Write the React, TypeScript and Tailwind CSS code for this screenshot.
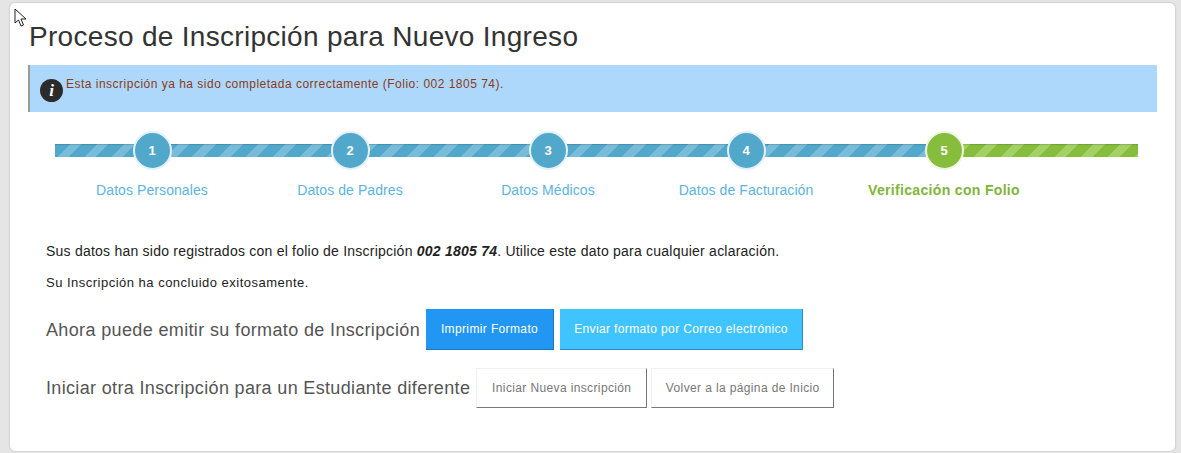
import React from "react";

const steps = [
  { n: 1, label: "Datos Personales" },
  { n: 2, label: "Datos de Padres" },
  { n: 3, label: "Datos Médicos" },
  { n: 4, label: "Datos de Facturación" },
];

const Step = ({ n, label, done }: { n: number; label: string; done?: boolean }) => (
  <div className="flex w-[198px] flex-col items-center">
    <div
      className={
        done
          ? "flex h-[39px] w-[39px] items-center justify-center rounded-full border-2 border-[#eef6e2] bg-[#86bd3d] text-[13px] font-bold text-white"
          : "flex h-[39px] w-[39px] items-center justify-center rounded-full border-2 border-[#e3f1f7] bg-[#52a8cb] text-[13px] font-bold text-white"
      }
    >
      {n}
    </div>
    <div
      className={
        done
          ? "mt-[11px] whitespace-nowrap text-[14px] font-bold leading-[18px] tracking-[0.33px] text-[#7fb539]"
          : "mt-[11px] whitespace-nowrap text-[14px] leading-[18px] tracking-[0.08px] text-[#5bb4dd]"
      }
    >
      {label}
    </div>
  </div>
);

const Btn = ({ className, children }: { className: string; children: React.ReactNode }) => (
  <button className={"whitespace-nowrap text-[12px] tracking-[0.37px] " + className}>{children}</button>
);

export default function App() {
  return (
    <div className="relative h-[453px] w-[1181px] overflow-hidden bg-[#e5e5e5] pl-[10px] pr-[6px] pt-[3px] font-['Liberation_Sans',Arial,sans-serif]">
      {/* cursor */}
      <svg className="absolute left-[14px] top-[8px]" width="13" height="19" viewBox="0 0 13 19">
        <path d="M1 1v14l3.5-3 2.5 6 2.5-1-2.5-6H12z" fill="#fff" stroke="#222" strokeWidth="1" />
      </svg>

      <div className="h-[448px] rounded-[5px] bg-white pl-[18px] pr-[18px] shadow-[0_0_2px_rgba(0,0,0,0.25)]">
        <h1 className="pl-px pt-[16px] text-[28px] font-normal leading-[36px] tracking-[0.3px] text-[#333]">
          Proceso de Inscripción para Nuevo Ingreso
        </h1>

        <div className="mt-[10px] flex h-[47px] items-start border-l-2 border-[#9a9a9a] bg-[#add8fb] pl-[10px] pt-[11px]">
          <span className="mt-[3px] flex h-[23px] w-[23px] shrink-0 items-center justify-center rounded-full bg-[#2b2b2b] font-['Liberation_Serif',serif] text-[17px] font-bold italic leading-none text-white">
            i
          </span>
          <span className="ml-[3px] text-[12px] leading-[16px] tracking-[0.49px] text-[#8a3b22]">
            Esta inscripción ya ha sido completada correctamente (Folio: 002 1805 74).
          </span>
        </div>

        {/* progress */}
        <div className="ml-[25px] mt-[19px] grid w-[1085px]">
          <div className="col-start-1 row-start-1 ml-[2px] mt-[13px] flex h-[13px]">
            <div className="w-[889px] bg-[repeating-linear-gradient(135deg,#52a8cb_0,#52a8cb_11px,#79bcd9_11px,#79bcd9_19px)] shadow-[inset_0_1px_1px_rgba(0,0,0,0.15)]" />
            <div className="flex-1 bg-[repeating-linear-gradient(135deg,#86bd3d_0,#86bd3d_11px,#a3d166_11px,#a3d166_19px)] shadow-[inset_0_1px_1px_rgba(0,0,0,0.15)]" />
          </div>
          <div className="col-start-1 row-start-1 flex">
            {steps.map((s) => (
              <Step key={s.n} n={s.n} label={s.label} />
            ))}
            <Step n={5} label="Verificación con Folio" done />
          </div>
        </div>

        <div className="pl-[18px]">
          <p className="mt-[42px] text-[14px] leading-[20px] tracking-[0.23px] text-[#222]">
            Sus datos han sido registrados con el folio de Inscripción{" "}
            <b className="italic">002 1805 74</b>. Utilice este dato para cualquier aclaración.
          </p>
          <p className="mt-[14px] text-[13px] leading-[16px] tracking-[0.49px] text-[#222]">
            Su Inscripción ha concluido exitosamente.
          </p>

          <div className="mt-[18px] flex items-center">
            <span className="text-[18px] leading-[24px] tracking-[0.36px] text-[#555]">Ahora puede emitir su formato de Inscripción</span>
            <Btn className="ml-[6px] h-[41px] w-[128px] border-b border-r border-b-[#1a78c4] border-r-[#1a78c4] bg-[#2196f3] text-white">
              Imprimir Formato
            </Btn>
            <Btn className="ml-[6px] h-[41px] w-[243px] border-b border-r border-b-[#2f8cb8] border-r-[#2f8cb8] bg-[#40c4ff] text-white">
              Enviar formato por Correo electrónico
            </Btn>
          </div>

          <div className="mt-[18px] flex items-center">
            <span className="text-[18px] leading-[24px] tracking-[0.34px] text-[#555]">Iniciar otra Inscripción para un Estudiante diferente</span>
            <Btn className="ml-[6px] h-[40px] w-[171px] border border-[#f0f0f0] border-b-[#777] border-r-[#777] bg-white text-[#777]">
              Iniciar Nueva inscripción
            </Btn>
            <Btn className="ml-[4px] h-[40px] w-[183px] border border-[#f0f0f0] border-b-[#777] border-r-[#777] bg-white text-[#777]">
              Volver a la página de Inicio
            </Btn>
          </div>
        </div>
      </div>
    </div>
  );
}
